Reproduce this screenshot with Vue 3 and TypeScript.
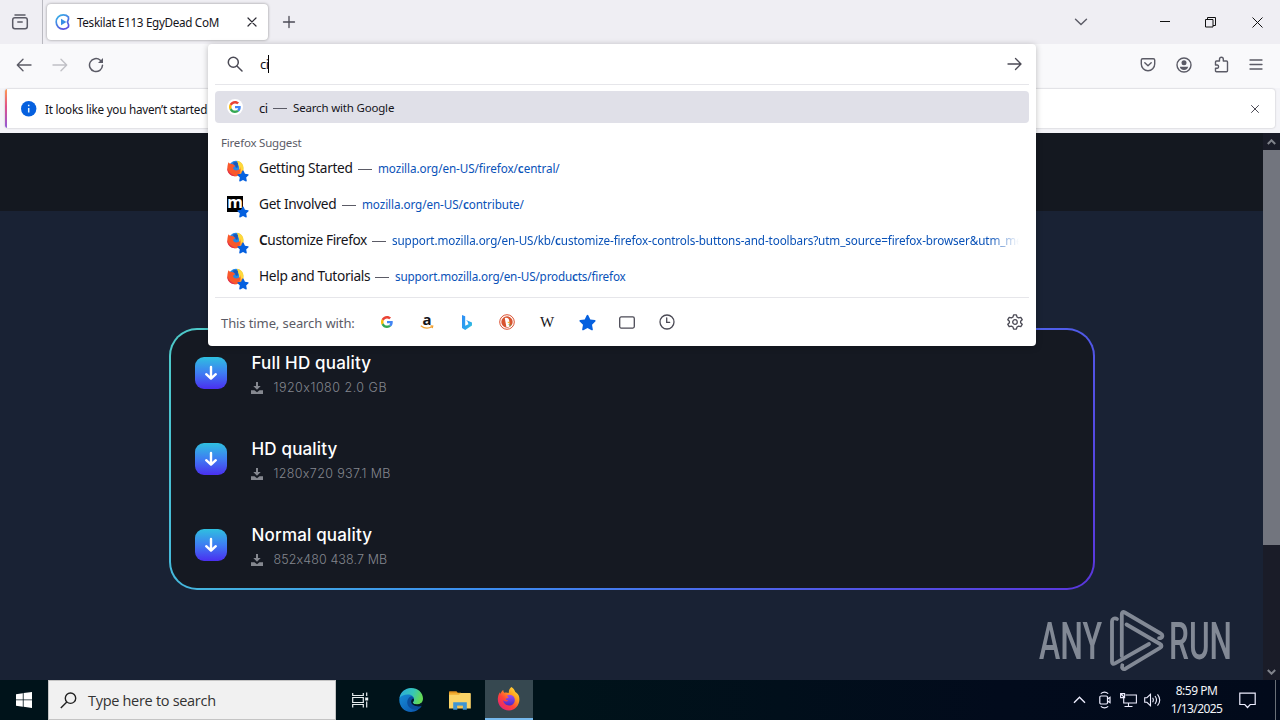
<script setup lang="ts">
interface Suggestion {
  lead: string
  title: string
  width: number
  icon: 'firefox' | 'mozilla'
  url: string[]
  cls: string
}

interface Download {
  title: string
  info: string
  cls: string
}

const suggestions: Suggestion[] = [
  { lead: '', title: 'Getting Started', width: 94, icon: 'firefox', url: ['mozilla.org/en-US/firefox/', 'c', 'entral/'], cls: 's1' },
  { lead: '', title: 'Get Involved', width: 78, icon: 'mozilla', url: ['mozilla.org/en-US/', 'c', 'ontribute/'], cls: 's2' },
  { lead: 'C', title: 'ustomize Firefox', width: 108, icon: 'firefox', url: ['support.mozilla.org/en-US/kb/', 'c', 'ustomize-firefox-controls-buttons-and-toolbars?utm_source=firefox-browser&utm_medium=default'], cls: 's3' },
  { lead: '', title: 'Help and Tutorials', width: 111, icon: 'firefox', url: ['support.mozilla.org/en-US/produ', 'c', 'ts/firefox'], cls: 's4' },
]

const downloads: Download[] = [
  { title: 'Full HD quality', info: '1920x1080 2.0 GB', cls: 'd1' },
  { title: 'HD quality', info: '1280x720 937.1 MB', cls: 'd2' },
  { title: 'Normal quality', info: '852x480 438.7 MB', cls: 'd3' },
]
</script>

<template>
  <div class="screen">
    <svg class="defs" width="0" height="0">
      <defs>
        <linearGradient id="fxBody" x1="1" y1="0" x2="0.2" y2="1">
          <stop offset="0" stop-color="#fff04a" />
          <stop offset="0.35" stop-color="#ffa51e" />
          <stop offset="0.65" stop-color="#ff4438" />
          <stop offset="1" stop-color="#e6207a" />
        </linearGradient>
        <linearGradient id="fxGlobe" x1="0.5" y1="0" x2="0.5" y2="1">
          <stop offset="0" stop-color="#9a4df0" />
          <stop offset="1" stop-color="#4a2bc4" />
        </linearGradient>
        <linearGradient id="edgeTop" x1="0" y1="0" x2="1" y2="0.3">
          <stop offset="0" stop-color="#2aa8e0" />
          <stop offset="0.6" stop-color="#36c6b8" />
          <stop offset="1" stop-color="#63d957" />
        </linearGradient>
        <linearGradient id="edgeLow" x1="0" y1="0" x2="0.8" y2="1">
          <stop offset="0" stop-color="#1894dc" />
          <stop offset="1" stop-color="#0c58b0" />
        </linearGradient>
        <linearGradient id="bingFill" x1="0" y1="0" x2="1" y2="1">
          <stop offset="0" stop-color="#2f8df5" />
          <stop offset="0.6" stop-color="#2aa3ee" />
          <stop offset="1" stop-color="#3fd2d0" />
        </linearGradient>
        <linearGradient id="tabLogo" x1="0" y1="0" x2="0.6" y2="1">
          <stop offset="0" stop-color="#35b8e8" />
          <stop offset="1" stop-color="#5a4fe0" />
        </linearGradient>
        <symbol id="googleG" viewBox="0 0 48 48">
          <path fill="#ea4335" d="M24 9.5c3.54 0 6.71 1.22 9.21 3.6l6.85-6.85C35.9 2.38 30.47 0 24 0 14.62 0 6.51 5.38 2.56 13.22l7.98 6.19C12.43 13.72 17.74 9.5 24 9.5z" />
          <path fill="#4285f4" d="M46.98 24.55c0-1.57-.15-3.09-.38-4.55H24v9.02h12.94c-.58 2.96-2.26 5.48-4.78 7.18l7.73 6c4.51-4.18 7.09-10.36 7.09-17.65z" />
          <path fill="#fbbc05" d="M10.53 28.59c-.48-1.45-.76-2.99-.76-4.59s.27-3.14.76-4.59l-7.98-6.19C.92 16.46 0 20.12 0 24c0 3.88.92 7.54 2.56 10.78l7.97-6.19z" />
          <path fill="#34a853" d="M24 48c6.48 0 11.93-2.13 15.89-5.81l-7.73-6c-2.15 1.45-4.92 2.3-8.16 2.3-6.26 0-11.57-4.22-13.47-9.91l-7.98 6.19C6.51 42.62 14.62 48 24 48z" />
        </symbol>
        <symbol id="star" viewBox="0 0 20 20">
          <path fill="#0560df" d="M10 .8c.4 0 .7.3.9.6l2.4 5 5.3.7c.9.1 1.2 1.1.6 1.7l-3.9 3.8 1 5.5c.1.8-.7 1.4-1.5 1L10 16.500l-4.800 2.600c-.8.4-1.600-.2-1.500-1l1-5.500L.8 8.800c-.6-.6-.3-1.600.6-1.700l5.300-.7 2.400-5c.2-.3.5-.6.9-.6z" />
        </symbol>
        <symbol id="firefoxOld" viewBox="0 0 20 20">
          <circle cx="10.500" cy="9.500" r="8.600" fill="#2487e8" />
          <path fill="#ffd83a" d="M12 .9c4 .5 7.500 3.800 7.500 8.600 0 5.500-4.200 9.500-9.500 9.500 0-2 3.600-4.500 4.300-8.800C14.800 7 12 5 12 .9z" />
          <path fill="#ff9d2e" d="M15.500 7.500c.8 5-2 8.500-6.500 10.500l1.500 1.100c5-.2 8.300-3.500 8.900-8.100-1 1.500-2.200 2-3.200 2.300.6-2 .4-4-.7-5.800z" />
          <path fill="#f9582b" d="M1.800 2.500C2.600 4 3.500 4.200 5.600 4.600c2 .4 3 1.400 4.300 2.300-.6 1-2.300 1-2.800 2.700 1.400 3.400 5.300 3.400 8.400.6.7 5-2 8.900-6 8.900C3.600 18.900 0 14.800.4 9.500.5 6.500 1 4.500 1.800 2.500z" />
          <path fill="#e0304e" d="M.4 9c1 4.500 4 7.500 9.600 10C3.500 19.400-.1 14 .4 9z" />
          <path fill="#1b58b8" d="M7 3.200c2.300-1.300 4.300-1 5.800.2-.2 2.400.5 3.800-.5 5.600-1.500.6-2.900-.3-2.400-2.100C8.800 6 7.700 5.300 7 3.200z" />
        </symbol>
      </defs>
    </svg>

    <header class="tabstrip">
      <div class="view-btn">
        <svg width="18" height="18" viewBox="0 0 18 18" fill="none" stroke="#5b5b66" stroke-width="1.500" stroke-linecap="round">
          <path d="M4 2h10" />
          <rect x="1.700" y="4.700" width="14.600" height="11" rx="2.200" />
          <path d="M6.800 9h4.400" />
        </svg>
      </div>
      <div class="tab">
        <svg class="fav" width="16" height="16" viewBox="0 0 16 16">
          <path d="M13.500 3.100C12.200 1.600 10.400.9 8.300.9 4.300.9 1.200 4 1.200 8s3.100 7.100 7.100 7.100c2.300 0 4-.8 5.200-2.300M13.300 2.900c.9 2-.3 3.600-.9 5.100.8 1.500 1.800 3.200 1 4.900" fill="none" stroke="url(#tabLogo)" stroke-width="1.700" stroke-linecap="round" />
          <path d="M6 4.700v6.600l5.400-3.300z" fill="#3a8ee6" />
        </svg>
        <span class="tab-title">Teskilat E113 EgyDead CoM</span>
        <svg width="10" height="10" viewBox="0 0 10 10" stroke="#2b2a33" stroke-width="1.200" stroke-linecap="round"><path d="M1 1l8 8M9 1l-8 8" /></svg>
      </div>
      <svg class="plus" width="14" height="14" viewBox="0 0 14 14" stroke="#4b4a55" stroke-width="1.300" stroke-linecap="round"><path d="M7 1.500v11M1.500 7h11" /></svg>
      <div class="win">
        <svg width="14" height="8" viewBox="0 0 14 8" fill="none" stroke="#5b5b66" stroke-width="1.400" stroke-linecap="round"><path d="M1.500 1.200L7 6.600l5.500-5.400" /></svg>
        <svg class="w-min" width="10" height="10" viewBox="0 0 10 10"><path d="M0 4.500h10" stroke="#111" /></svg>
        <svg class="w-max" width="11" height="11" viewBox="0 0 11 11" fill="none" stroke="#111"><path d="M.5 2.500h7.500v7.500H.5zM2.500 2.500V.5h8v8H8" /></svg>
        <svg class="w-close" width="11" height="11" viewBox="0 0 11 11" stroke="#111"><path d="M.5.5l10 10M10.500.5l-10 10" /></svg>
      </div>
    </header>

    <nav class="toolbar">
      <svg class="t-back" width="16" height="14" viewBox="0 0 16 14" fill="none" stroke="#5b5b66" stroke-width="1.400" stroke-linecap="round" stroke-linejoin="round"><path d="M15 7H1.500M7 1.300L1.300 7 7 12.700" /></svg>
      <svg class="t-fwd" width="16" height="14" viewBox="0 0 16 14" fill="none" stroke="#c0c0c6" stroke-width="1.400" stroke-linecap="round" stroke-linejoin="round"><path d="M1 7h13.500M9 1.300L14.700 7 9 12.700" /></svg>
      <svg class="t-reload" width="16" height="16" viewBox="0 0 16 16" fill="none" stroke="#5b5b66" stroke-width="1.500" stroke-linecap="round"><path d="M14.500 8.300a6.500 6.500 0 1 1-2.200-5.100l1.600 1.600" /><path d="M15 1v5h-5z" fill="#5b5b66" stroke="none" /></svg>
      <div class="t-right">
        <svg width="16" height="16" viewBox="0 0 16 16" fill="none" stroke="#5b5b66" stroke-width="1.400" stroke-linecap="round" stroke-linejoin="round"><path d="M2.700 1.700h10.600c.8 0 1.400.6 1.400 1.400v3.900a6.700 6.700 0 0 1-13.400 0V3.100c0-.8.6-1.400 1.400-1.400z" /><path d="M4.800 5.800L8 8.800l3.200-3" /></svg>
        <svg width="16" height="16" viewBox="0 0 16 16"><circle cx="8" cy="8" r="7" fill="none" stroke="#5b5b66" stroke-width="1.400" /><circle cx="8" cy="5.800" r="2.500" fill="#5b5b66" /><path d="M3.900 9.800h8.200c0 1.700-1.800 3.200-4.100 3.200s-4.100-1.500-4.100-3.200z" fill="#5b5b66" /></svg>
        <svg width="16" height="17" viewBox="0 0 16 17" fill="none" stroke="#5b5b66" stroke-width="1.400" stroke-linejoin="round"><path d="M2.500 9V6c0-.6.4-1 1-1h3V3.200a1.900 1.900 0 0 1 3.800 0V5h3.200c.6 0 1 .4 1 1v8.800c0 .6-.4 1-1 1h-10c-.6 0-1-.4-1-1V12.300h1.800a1.700 1.700 0 0 0 0-3.300z" /></svg>
        <svg width="14" height="12" viewBox="0 0 14 12" stroke="#5b5b66" stroke-width="1.300" stroke-linecap="round"><path d="M1 1h12M1 5.500h12M1 10h12" /></svg>
      </div>
    </nav>

    <section class="notice-wrap">
      <div class="notice">
        <svg width="16" height="16" viewBox="0 0 16 16"><circle cx="7.700" cy="7.700" r="7.700" fill="#0560df" /><path d="M7.700 7v4.600M7.700 3.800v1.500" stroke="#e8f4ff" stroke-width="1.500" /></svg>
        <span class="notice-text">It looks like you haven’t started Firefox in a while.</span>
        <svg class="n-close" width="8" height="8" viewBox="0 0 8 8" stroke="#4b4a55" stroke-linecap="round"><path d="M.5.5l7 7M7.500.5l-7 7" /></svg>
      </div>
    </section>

    <main class="page">
      <div class="content">
        <div class="site-head"></div>
        <div class="card">
          <div class="card-in">
            <div v-for="d in downloads" :key="d.title" class="dl" :class="d.cls">
              <div class="dl-btn">
                <svg width="14" height="16" viewBox="0 0 14 16" fill="none" stroke="#fff" stroke-width="2.400" stroke-linecap="round" stroke-linejoin="round"><path d="M7 2v11.500M2.200 9.200L7 13.700l4.800-4.500" /></svg>
              </div>
              <div class="dl-text">
                <div class="dl-title"><span>{{ d.title }}</span></div>
                <div class="dl-info">
                  <svg width="12" height="12" viewBox="0 0 12 12" fill="#858890"><path d="M5 0h2v4h2.700L6 7.700 2.300 4H5zM0 8.200h3.500L6 10.300l2.500-2.100H12V12H0z" /></svg>
                  <span>{{ d.info }}</span>
                </div>
              </div>
            </div>
          </div>
        </div>
      </div>
      <div class="scroll">
        <svg width="9" height="6" viewBox="0 0 9 6" fill="none" stroke="#80838b" stroke-width="2"><path d="M.8 5l3.700-3.700L8.200 5" /></svg>
        <div class="thumb"></div>
        <svg width="9" height="6" viewBox="0 0 9 6" fill="none" stroke="#80838b" stroke-width="2"><path d="M.8 1l3.700 3.700L8.200 1" /></svg>
      </div>
    </main>

    <footer class="taskbar">
      <div class="start">
        <svg width="16" height="16" viewBox="0 0 16 16" fill="#fff"><path d="M0 2.200L6.800 1.200v6.300H0zM7.600 1.100L16 0v7.500H7.600zM0 8.300h6.800v6.400L0 13.800zM7.600 8.300H16V16l-8.400-1.200z" /></svg>
      </div>
      <div class="search">
        <svg width="17" height="17" viewBox="0 0 17 17" fill="none" stroke="#222" stroke-width="1.400"><circle cx="10.500" cy="6.200" r="5.200" /><path d="M6.800 10L.8 16" /></svg>
        <span>Type here to search</span>
      </div>
      <div class="app">
        <svg width="17" height="16" viewBox="0 0 17 16" fill="none" stroke="#e8eef0" stroke-width="1.200"><path d="M.7 1v2.500h10.600V1M.7 15.500V12.500h10.600v3M.7 5.500h10.600v5H.7zM14.700.5v3.500M14.700 9.500v6" /><path d="M13.200 5.500h3v3h-3z" fill="#e8eef0" stroke="none" /></svg>
      </div>
      <div class="app edge">
        <svg width="24" height="24" viewBox="0 0 24 24">
          <path fill="url(#edgeLow)" d="M.3 12C.3 5.700 6 .3 12.300.4c5 0 8.500 3.500 9 8l-5 5.600-3 1.500c1 3.300 5.200 4.200 9 2.600C20.500 21.500 16.600 24 12 24 5.300 24 .3 18.500.3 12z" />
          <path fill="url(#edgeTop)" d="M.5 10C1.300 4.200 6.300 0 12 0c7 0 12 4.800 12 10.500 0 3.700-2.500 6-6 6-2.500 0-4.200-1-4.200-2 0-.6 1.200-1.200 1.200-3.300C15 8.500 12.300 6.500 8.800 6.500 5 6.500 2 8 .5 10z" />
          <path fill="#0b4e9c" d="M8.200 14.200c0-3 1.700-5.300 4.200-6 1.600.5 2.600 1.700 2.600 3 0 2-1.200 2.600-1.200 3.300 0 1.800 3.600 4.300 9 3.200-1.700 3-5.300 4.500-8 3.800-3.800-.9-6.600-3.700-6.600-7.300z" />
          <path fill="#03192b" d="M15 11.200c0 2-1.200 2.600-1.200 3.300 0 1 1.700 2 4.200 2 1.800 0 3.300-.6 4.400-1.700l1.300 1.500-1.300 1.700c-4 1.200-9.500-.5-10.200-3.700-.3-1.600.5-3.100 1.800-3.800z" />
        </svg>
      </div>
      <div class="app folder">
        <svg width="22" height="19" viewBox="0 0 22 19">
          <path d="M0 1.200C0 .6.400.2 1 .2h6.500l1.500 2H0z" fill="#e08f1c" />
          <path d="M0 2h21c.5 0 .8.300.8.800V17.500H0z" fill="#fbd467" />
          <path d="M0 1.800h12l-2 2H0z" fill="#f0ae31" />
          <path d="M4.200 11.200h13.600v7.500h-4v-3.900H8.300v3.900H4.200z" fill="#3f95d2" />
          <path d="M8.300 14.800h5.500v1.700H8.300z" fill="#f5bf48" />
        </svg>
      </div>
      <div class="app active">
        <svg width="24" height="24" viewBox="0 0 24 24">
          <path fill="url(#fxBody)" d="M14.300 0c2.200 1.300 3.500 3.200 4 5 .9.400 2.500 1.600 3.400 3.600C24.300 15.500 19.500 23.500 12 23.500S-.2 16.800 1 10.200c.3-2.200 1-3.800 2-5l.5 1.800c.5-1.600 1.400-3 2.700-3.900 0 1 .4 1.900 1 2.600 1.600-.5 3.200-.3 4.500.3C11.600 3.700 12.500 1.700 14.300 0z" />
          <path fill="url(#fxGlobe)" d="M11.500 8.100c3.500-.7 6.300 1.400 6.300 4.800 0 3.300-2.500 5.600-5.800 5.600s-5.800-2.500-5.800-5.200c1.800 1.500 4 1.600 5.200.3-1.800-.2-2.500-.9-2.700-1.800.5-.6 1.800-.4 2.700-1 .2-.9-.7-1.500-1.700-1.900.5-.5 1.200-.7 1.800-.8z" />
        </svg>
      </div>
      <div class="tray">
        <svg width="13" height="8" viewBox="0 0 13 8" fill="none" stroke="#eef" stroke-width="1.400"><path d="M1 6.800l5.500-5.500L12 6.800" /></svg>
        <svg class="y-cam" width="12" height="18" viewBox="0 0 12 18" fill="none" stroke="#eef" stroke-width="1.200"><rect x=".8" y="5" width="7.700" height="8" rx="1.200" /><path d="M8.500 8L11 6.300v5.400L8.500 10M1.800 2.600Q5.500-.4 9.200 2.600M1.800 15.400Q5.500 18.400 9.200 15.400" /></svg>
        <svg class="y-net" width="17" height="15" viewBox="0 0 17 15" fill="none" stroke="#eef" stroke-width="1.100"><path d="M5.500 2h10.900v8H3.700V5M.6.6h4v4h-4zM1 1l3 3M4.500 13.500h8M8.500 10v3.500" /></svg>
        <svg class="y-vol" width="17" height="14" viewBox="0 0 17 14" fill="none" stroke="#eef" stroke-width="1.100"><path d="M.7 4.700h2.200L6.500 1.300v11.400L2.900 9.300H.7zM8.600 4.700q1.500 2.300 0 4.600M11 3q3 4 0 8M13.500 1.300q4.500 5.700 0 11.400" /></svg>
        <div class="clock"><span class="time">8:59 PM</span><span class="date">1/13/2025</span></div>
        <svg class="y-note" width="17" height="17" viewBox="0 0 17 17" fill="none" stroke="#eef" stroke-width="1.200"><path d="M.8 1.200h15.400v11.300h-5l-2.700 3-2.700-3h-5z" /></svg>
        <div class="desk"></div>
      </div>
    </footer>

    <svg class="mark" width="210" height="76" viewBox="0 0 210 76">
      <g fill="#9da3ae" class="mark-text">
        <text x="4" y="55" textLength="63" lengthAdjust="spacingAndGlyphs">ANY</text>
        <text x="134" y="55" textLength="63" lengthAdjust="spacingAndGlyphs">RUN</text>
      </g>
      <g fill="none" stroke="#9da3ae" stroke-width="3.800" stroke-linecap="round" stroke-linejoin="round">
        <path d="M82 15c-2.300-1.500-5-.3-5 2.300v40.500c0 2 1.200 2.500 3 1.500L114 40" />
        <path d="M86.800 52V10.300c0-2.200 1.200-2.800 3-1.800l35.800 21c3 1.800 1.800 4.800-1.500 4.600" />
        <path d="M91.500 20.500L125 40c2 1.200 2 2.600 0 3.800L90.500 64.700c-2.500 1.200-4-.8-3.200-3.500" />
      </g>
    </svg>

    <section class="panel">
      <div class="urlbar">
        <svg class="mag" width="16" height="16" viewBox="0 0 16 16" fill="none" stroke="#4b4a55" stroke-width="1.500" stroke-linecap="round"><circle cx="6.300" cy="6.300" r="5" /><path d="M10.200 10.200L15 15" /></svg>
        <span class="typed">ci</span><i class="caret"></i>
        <svg class="go" width="15" height="14" viewBox="0 0 15 14" fill="none" stroke="#4b4a55" stroke-width="1.300" stroke-linecap="round" stroke-linejoin="round"><path d="M1 7h12.800M8.500 1.500L14 7l-5.500 5.500" /></svg>
      </div>
      <div class="results">
        <div class="selected">
          <div class="g-round"><svg width="12" height="12"><use href="#googleG" /></svg></div>
          <span class="sel-q">ci</span><i class="dash"></i><span class="sel-t">Search with Google</span>
        </div>
        <div class="group">Firefox Suggest</div>
        <div v-for="s in suggestions" :key="s.title" class="row" :class="s.cls">
          <div class="row-icon">
            <svg v-if="s.icon === 'firefox'" width="17" height="17"><use href="#firefoxOld" /></svg>
            <div v-else class="moz">m</div>
            <svg class="badge" width="12" height="12"><use href="#star" /></svg>
          </div>
          <span class="row-title" :style="{ width: s.width + 'px' }"><span><b>{{ s.lead }}</b>{{ s.title }}</span></span>
          <i class="dash"></i>
          <span class="row-url">{{ s.url[0] }}<b>{{ s.url[1] }}</b>{{ s.url[2] }}</span>
        </div>
      </div>
      <div class="oneoff">
        <span class="one-label">This time, search with:</span>
        <div class="engines">
          <div class="eng"><svg width="12" height="12"><use href="#googleG" /></svg></div>
          <div class="eng amazon"><span>a</span><svg width="14" height="5" viewBox="0 0 14 5" fill="none" stroke="#f0a030" stroke-width="1.300"><path d="M.8.800Q6 5 12 1.800M10.500.9l2.200.2-.5 2" /></svg></div>
          <div class="eng"><svg width="12" height="15" viewBox="0 0 12 15"><path d="M1 0l3.200 1.200v9.600L7.500 9.200 6.500 6.500 5 5l6 2.400v3.200L4.200 15 1 13.100z" fill="url(#bingFill)" /></svg></div>
          <div class="eng"><svg width="16" height="16" viewBox="0 0 16 16"><circle cx="8" cy="8" r="7.300" fill="#fff" stroke="#dc5233" stroke-width="1" /><circle cx="8" cy="8" r="5.700" fill="#d8542f" /><path d="M5.800 4.200c2-1.200 4.300.2 4.400 2.400l.4 5.800c-1 .6-2.300.8-3.200.6z" fill="#fff" /><path d="M8.500 7.800l3 .2-2.500 1.200z" fill="#fdb813" /><path d="M9 10.500l2.500-.3v2z" fill="#5fb04a" /></svg></div>
          <div class="eng wiki">W</div>
          <div class="eng"><svg width="17" height="17"><use href="#star" /></svg></div>
          <div class="eng"><svg width="16" height="13" viewBox="0 0 16 13"><rect x=".7" y=".9" width="14.600" height="11.200" rx="1.500" fill="none" stroke="#4b4a55" stroke-width="1.300" /></svg></div>
          <div class="eng"><svg width="16" height="16" viewBox="0 0 16 16" fill="none" stroke="#4b4a55" stroke-width="1.300" stroke-linecap="round"><circle cx="8" cy="8" r="7" /><path d="M7.700 3.800v4.500h3" /></svg></div>
        </div>
        <svg class="gear" width="16" height="16" viewBox="0 0 16 16" fill="none" stroke="#4b4a55" stroke-width="1.300" stroke-linejoin="round"><path d="M6.600.8h2.800l.6 2.200 1.600.9 2.200-.6 1.400 2.400L13.600 7.200v1.600l1.600 1.500-1.400 2.400-2.200-.6-1.600.9-.6 2.200H6.600L6 13l-1.600-.9-2.200.6L.8 10.300l1.600-1.500V7.200L.8 5.700l1.400-2.400 2.200.6L6 3z" /><circle cx="8" cy="8" r="2.300" /></svg>
      </div>
    </section>
  </div>
</template>

<style>
html, body { overflow: hidden; }
</style>

<style scoped>
* { box-sizing: border-box; }
svg { display: block; flex: none; }
i { font-style: normal; flex: none; }
span { white-space: nowrap; }

.screen {
  position: relative;
  width: 1280px;
  height: 720px;
  overflow: hidden;
  display: flex;
  flex-direction: column;
  font-family: "Noto Sans", "Open Sans", sans-serif;
  color: #15141a;
}
.defs { position: absolute; }

/* tab strip */
.tabstrip { height: 44px; flex: none; display: flex; align-items: center; background: #efeef3; }
.view-btn { width: 43px; height: 44px; border-right: 1px solid #b9b9c0; display: flex; align-items: center; padding-left: 11px; }
.tab { width: 221px; height: 36px; margin-left: 4px; border-radius: 4px; background: #fff; box-shadow: 0 0 3px rgba(0, 0, 0, 0.4); display: flex; align-items: center; padding: 0 11px 0 8px; }
.tab-title { flex: 1; margin-left: 6px; font-size: 11.700px; letter-spacing: -0.330px; }
.plus { margin-left: 14px; }
.win { margin-left: auto; display: flex; align-items: center; padding-right: 17px; }
.w-min { margin-left: 72px; }
.w-max { margin-left: 35px; }
.w-close { margin-left: 36px; }

/* navigation */
.toolbar { height: 44px; flex: none; display: flex; align-items: center; background: #f9f9fb; padding: 0 17px 3px 16px; }
.t-fwd { margin-left: 20px; }
.t-reload { margin-left: 20px; }
.t-right { margin-left: auto; display: flex; align-items: center; gap: 20.500px; }

/* notification */
.notice-wrap { height: 45px; flex: none; background: #f4f4f8; padding: 1px 5px 5px 5px; }
.notice { height: 39px; background: linear-gradient(#ff9a50, #e0508a 45%, #9059d8) left / 2px 100% no-repeat #fff; border-radius: 3px; box-shadow: 0 0 2px rgba(0, 0, 0, 0.25); display: flex; align-items: center; padding: 0 16px; }
.notice-text { margin-left: 8px; font-size: 11.700px; letter-spacing: -0.250px; }
.n-close { margin-left: auto; }

/* page */
.page { height: 547px; flex: none; display: flex; background: #192234; }
.content { flex: 1; display: flex; flex-direction: column; }
.site-head { height: 78px; background: #141820; flex: none; }
.card { width: 926px; height: 262px; margin: 117px auto 0; padding: 2px; border-radius: 28px; background: linear-gradient(135deg, #4ecbc8 0%, #45b8dc 22%, #3c8ef0 48%, #4e62ea 72%, #5a35dc 100%); }
.card-in { height: 258px; border-radius: 26px; background: #151922; padding: 22px 24px 0; }
.dl { height: 86px; display: flex; align-items: flex-start; }
.dl-btn { width: 32px; height: 32px; margin-top: 5px; border-radius: 9px; background: linear-gradient(#2fc0e0, #3e7df2 50%, #4a2ff0); display: flex; align-items: center; justify-content: center; }
.dl-text { margin-left: 25px; }
.dl-title { height: 24px; line-height: 23px; color: #fff; font-family: Inter, sans-serif; font-weight: 500; font-size: 17px; letter-spacing: 0.170px; }
.dl-info { display: flex; align-items: center; height: 23px; color: #84878f; font-family: Inter, sans-serif; font-weight: 300; font-size: 12.500px; font-feature-settings: "calt" 0; margin-left: -1px; }
.dl-info span { margin-left: 11px; letter-spacing: 0.500px; }
.d2 .dl-info span { letter-spacing: 0.350px; }
.d3 .dl-info span { letter-spacing: 0.100px; }

.scroll { width: 17px; background: #1a1c28; display: flex; flex-direction: column; align-items: center; padding: 6px 0 5px; }
.thumb { width: 17px; height: 395px; margin: 5px 0 auto; background: #72757e; }

/* taskbar */
.taskbar { height: 40px; flex: none; display: flex; background: linear-gradient(90deg, #00131a 0, #00131a 560px, #020b1c 1000px, #020a1b); }
.start { width: 48px; display: flex; align-items: center; justify-content: center; }
.search { width: 288px; background: #f1f1f1; border: 1px solid #c4c4c4; display: flex; align-items: center; padding-left: 11px; color: #333; }
.search span { margin-left: 11px; font-size: 14.500px; font-family: "Open Sans", sans-serif; letter-spacing: -0.300px; }
.app { width: 49px; display: flex; align-items: center; justify-content: center; }
.edge { width: 52px; }
.folder { padding-right: 4px; }
.active { width: 48px; background: #364850; border-bottom: 2px solid #76b9ed; margin-left: -1px; }
.tray { margin-left: auto; display: flex; align-items: center; }
.y-cam { margin-left: 13px; }
.y-net { margin-left: 9px; }
.y-vol { margin-left: 7px; }
.clock { width: 71px; display: flex; flex-direction: column; align-items: center; color: #f2f4f8; font-size: 12px; line-height: 18px; margin-bottom: 1px; }
.time { letter-spacing: -0.5px; }
.date { letter-spacing: -0.6px; }
.y-note { margin-left: 7px; }
.desk { width: 1px; height: 40px; background: #6a7078; margin: 0 4px 0 19px; }

/* watermark */
.mark { position: absolute; left: 1035px; top: 604px; opacity: 0.8; }
.mark-text { font-family: Roboto, sans-serif; font-size: 52px; font-weight: 500; }

/* address bar dropdown */
.panel { position: absolute; left: 208px; top: 44px; width: 828px; height: 302px; background: #fff; border-radius: 4px; box-shadow: 0 1px 6px rgba(0, 0, 0, 0.25); padding: 0 7px; display: flex; flex-direction: column; }
.urlbar { height: 41px; flex: none; border-bottom: 1px solid #e6e6ea; display: flex; align-items: center; padding: 0 7px 0 12px; }
.typed { margin-left: 17px; font-size: 13px; letter-spacing: -0.500px; width: 9px; }
.caret { width: 1px; height: 18px; background: #000; margin-left: -1px; }
.go { margin-left: auto; }
.results { height: 213px; flex: none; border-bottom: 1px solid #e6e6ea; padding-top: 6px; }
.selected { height: 32px; background: #e0e0e8; border-radius: 4px; display: flex; align-items: center; padding-left: 12px; }
.g-round { width: 16px; height: 16px; border-radius: 50%; background: #fff; display: flex; align-items: center; justify-content: center; }
.sel-q { width: 10px; margin-left: 16px; margin-top: 2px; line-height: 16px; font-size: 13px; letter-spacing: -0.500px; }
.sel-t { font-size: 11.500px; margin-left: 6px; margin-top: 2px; line-height: 16px; letter-spacing: -0.180px; }
.dash { width: 14px; height: 1px; background: #5b5b66; margin-left: 5px; margin-top: 2px; }
.selected .dash { margin-left: 4px; }
.group { height: 27px; line-height: 40px; padding-left: 6px; font-size: 11.500px; letter-spacing: -0.200px; color: #5b5b66; }
.row { height: 36px; display: flex; align-items: center; padding-left: 12px; margin-right: 10px; overflow: hidden; }
.row-icon { position: relative; width: 16px; height: 16px; flex: none; }
.badge { position: absolute; left: 10px; top: 10px; }
.moz { width: 16px; height: 16px; background: #000; color: #fff; font: bold 16px/13px "Noto Sans", sans-serif; text-align: center; }
.row-title { flex: none; margin-left: 16px; margin-top: -1px; font-size: 13.700px; letter-spacing: -0.320px; }
.s3 .row-title { letter-spacing: -0.400px; }
.row-title b { font-weight: 600; }
.row-url { flex: 1; min-width: 0; overflow: hidden; margin-left: 6px; font-size: 11.700px; letter-spacing: -0.080px; color: #0a52b8; }
.s4 .row-url { letter-spacing: -0.160px; }
.s3 .row-url { letter-spacing: -0.120px; }
.row-url b { font-weight: 600; }
.s3 .row-url { mask-image: linear-gradient(90deg, #000 0, #000 calc(100% - 30px), transparent); }
.oneoff { height: 48px; display: flex; align-items: center; padding: 0 6px 0 6px; }
.one-label { width: 146px; margin-top: 2px; font-size: 13px; letter-spacing: -0.100px; color: #5b5b66; }
.engines { display: flex; }
.eng { width: 40px; height: 24px; display: flex; align-items: center; justify-content: center; }
.amazon { flex-direction: column; }
.amazon span { font: bold 15px/11px "Noto Sans", sans-serif; }
.wiki { font: 15px/16px "Liberation Serif", serif; }
.gear { margin-left: auto; }
</style>
